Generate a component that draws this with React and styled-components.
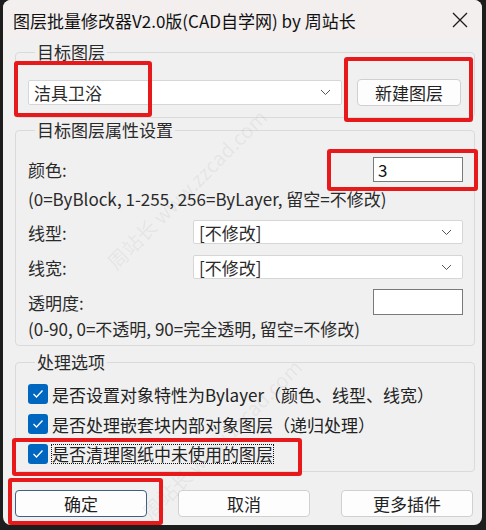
import React from "react";
import styled, {createGlobalStyle} from "styled-components";

const Global = createGlobalStyle`
    html, body {
        margin: 0;
        padding: 0;
        background: #1d1d1d;
    }
    body {
        font-family: "Noto Sans CJK SC", "Noto Sans", sans-serif;
    }
`;

const Page = styled.div`
    position: relative;
    width: 486px;
    height: 530px;
    overflow: hidden;
`;

const Window = styled.div`
    margin-left: 3px;
    width: 479px;
    height: 525px;
    border-radius: 8px;
    overflow: hidden;
    background: #f0f0f0;
    display: flex;
    flex-direction: column;
`;

const TitleBar = styled.div`
    height: 40px;
    flex-shrink: 0;
    display: flex;
    align-items: center;
    justify-content: space-between;
    padding: 0 14px 0 10px;
    background: #f2efee;
    font-size: 17px;
    color: #111;
`;

const Content = styled.div`
    display: flex;
    flex-direction: column;
    padding: 1px 7px 0 12px;
`;

const Group = styled.fieldset`
    margin: ${({$mt}) => $mt || 0}px 0 0 0;
    padding: ${({$pad}) => $pad};
    border: 1px solid #dadada;
    border-radius: 4px;
    min-width: 0;
`;

const Legend = styled.legend`
    margin-left: 7px;
    padding: 0 2px;
    font-size: 17px;
    line-height: 22px;
    color: #2a2a2a;
`;

const Row = styled.div`
    display: flex;
    align-items: center;
    justify-content: space-between;
    margin-top: ${({$mt}) => $mt || 0}px;
    height: ${({$h}) => $h}px;
`;

const Label = styled.span`
    font-size: 17px;
    color: #2a2a2a;
`;

const Hint = styled.div`
    font-size: 17px;
    line-height: 22px;
    color: #2a2a2a;
    margin-top: ${({$mt}) => $mt || 0}px;
    white-space: nowrap;
`;

const Combo = styled.div`
    box-sizing: border-box;
    width: ${({$w}) => $w ? `${$w}px` : "auto"};
    flex: ${({$w}) => $w ? "none" : 1};
    height: ${({$h}) => $h || 25}px;
    background: #fff;
    border: 1px solid #d6d6d6;
    border-radius: 2px;
    display: flex;
    align-items: center;
    justify-content: space-between;
    padding: 0 10px 0 5px;
    font-size: 17px;
    color: #2a2a2a;
`;

const TextBox = styled.div`
    box-sizing: border-box;
    width: 90px;
    height: ${({$h}) => $h}px;
    background: #fff;
    border: 1px solid #7a7a7a;
    padding: 0 4px;
    display: flex;
    align-items: center;
    font-size: 17px;
    color: #111;
`;

const Button = styled.div`
    box-sizing: border-box;
    width: ${({$w}) => $w}px;
    margin-left: ${({$ml}) => $ml || 0}px;
    height: 27px;
    background: #fdfdfd;
    border: 1px solid ${({$default}) => $default ? "#3f5f86" : "#d0d0d0"};
    border-radius: 4px;
    display: flex;
    align-items: center;
    justify-content: center;
    font-size: 17px;
    color: #222;
`;

const CheckList = styled.div`
    display: flex;
    flex-direction: column;
    gap: 10px;
`;

const CheckRow = styled.div`
    display: flex;
    align-items: center;
    gap: 4px;
    height: 20px;
    font-size: 17px;
    color: #222;
    white-space: nowrap;
`;

const Box = styled.span`
    width: 20px;
    height: 20px;
    border-radius: 3px;
    background: #0067c0;
    display: flex;
    align-items: center;
    justify-content: center;
    flex-shrink: 0;
`;

const Focused = styled.span`
    outline: 1px dotted #111;
    line-height: 18px;
`;

const ButtonBar = styled.div`
    display: flex;
    justify-content: space-between;
    padding: 18px 9px 0 12px;
`;

const Mark = styled.div`
    position: absolute;
    left: ${({$x}) => $x}px;
    top: ${({$y}) => $y}px;
    width: ${({$w}) => $w}px;
    height: ${({$h}) => $h}px;
    box-sizing: border-box;
    border: 4px solid #e8191b;
    border-radius: 3px;
    pointer-events: none;
`;

const Watermark = styled.div`
    position: absolute;
    left: ${({$x}) => $x}px;
    top: ${({$y}) => $y}px;
    transform: rotate(-45deg);
    transform-origin: left top;
    font-size: 20px;
    color: rgba(130, 130, 130, 0.1);
    white-space: nowrap;
    pointer-events: none;
`;

const Chevron = () => (
    <svg width="11" height="7" viewBox="0 0 11 7">
        <polyline points="1,1 5.5,5.5 10,1" fill="none" stroke="#555" strokeWidth="1"/>
    </svg>
);

const CloseIcon = () => (
    <svg width="16" height="16" viewBox="0 0 16 16">
        <path d="M1 1 L15 15 M15 1 L1 15" stroke="#1b1b1b" strokeWidth="1.3"/>
    </svg>
);

const Tick = () => (
    <svg width="12" height="10" viewBox="0 0 12 10">
        <polyline points="1.5,5 4.5,8 10.5,1.5" fill="none" stroke="#fff" strokeWidth="1.3"/>
    </svg>
);

const Check = ({children}) => (
    <CheckRow>
        <Box><Tick/></Box>
        {children}
    </CheckRow>
);

export default function App() {
    return (
        <Page>
            <Global/>
            <Window>
                <TitleBar>
                    <span>图层批量修改器V2.0版(CAD自学网) by 周站长</span>
                    <CloseIcon/>
                </TitleBar>
                <Content>
                    <Group $pad="16px 13px 11px 12px">
                        <Legend>目标图层</Legend>
                        <Row $h={27}>
                            <Combo>
                                <span>洁具卫浴</span>
                                <Chevron/>
                            </Combo>
                            <Button $w={104} $ml={15}>新建图层</Button>
                        </Row>
                    </Group>
                    <Group $mt={1} $pad="16px 11px 5px 12px">
                        <Legend>目标图层属性设置</Legend>
                        <Row $h={25}>
                            <Label>颜色:</Label>
                            <TextBox $h={25}>3</TextBox>
                        </Row>
                        <Hint $mt={6}>(0=ByBlock, 1-255, 256=ByLayer, 留空=不修改)</Hint>
                        <Row $mt={10} $h={24}>
                            <Label>线型:</Label>
                            <Combo $w={270} $h={24}>
                                <span>[不修改]</span>
                                <Chevron/>
                            </Combo>
                        </Row>
                        <Row $mt={11} $h={24}>
                            <Label>线宽:</Label>
                            <Combo $w={270} $h={24}>
                                <span>[不修改]</span>
                                <Chevron/>
                            </Combo>
                        </Row>
                        <Row $mt={10} $h={26}>
                            <Label>透明度:</Label>
                            <TextBox $h={26}/>
                        </Row>
                        <Hint $mt={3}>(0-90, 0=不透明, 90=完全透明, 留空=不修改)</Hint>
                    </Group>
                    <Group $mt={5} $pad="11px 11px 7px 12px">
                        <Legend>处理选项</Legend>
                        <CheckList>
                            <Check>是否设置对象特性为Bylayer（颜色、线型、线宽）</Check>
                            <Check>是否处理嵌套块内部对象图层（递归处理）</Check>
                            <Check><Focused>是否清理图纸中未使用的图层</Focused></Check>
                        </CheckList>
                    </Group>
                </Content>
                <ButtonBar>
                    <Button $w={132} $default>确定</Button>
                    <Button $w={132}>取消</Button>
                    <Button $w={132}>更多插件</Button>
                </ButtonBar>
            </Window>

            <Watermark $x={100} $y={255}>周站长 www.zzcad.com</Watermark>
            <Watermark $x={135} $y={505}>周站长 www.zzcad.com</Watermark>

            <Mark $x={14} $y={61} $w={138} $h={56}/>
            <Mark $x={344} $y={57} $w={129} $h={65}/>
            <Mark $x={327} $y={149} $w={151} $h={42}/>
            <Mark $x={12} $y={438} $w={290} $h={38}/>
            <Mark $x={8} $y={478} $w={155} $h={47}/>
        </Page>
    );
}
